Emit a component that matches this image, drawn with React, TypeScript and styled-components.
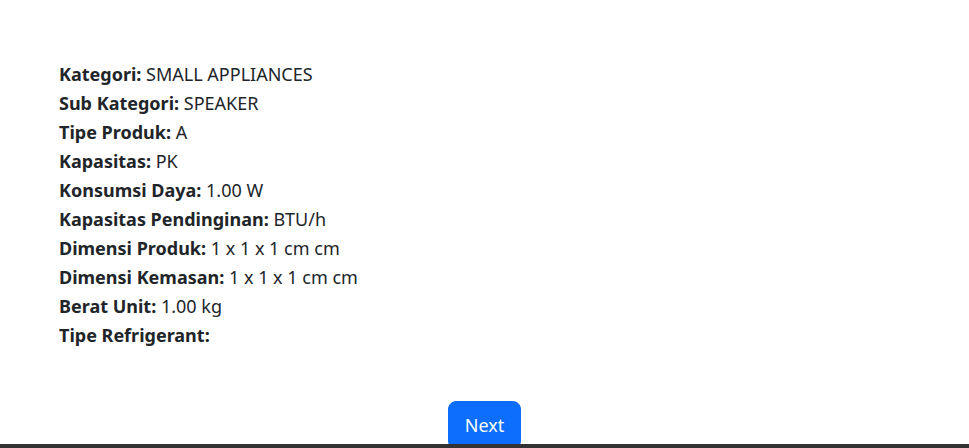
import styled, { createGlobalStyle } from 'styled-components'

interface Spec {
  label: string
  value: string
}

const specs: Spec[] = [
  { label: 'Kategori', value: 'SMALL APPLIANCES' },
  { label: 'Sub Kategori', value: 'SPEAKER' },
  { label: 'Tipe Produk', value: 'A' },
  { label: 'Kapasitas', value: 'PK' },
  { label: 'Konsumsi Daya', value: '1.00 W' },
  { label: 'Kapasitas Pendinginan', value: 'BTU/h' },
  { label: 'Dimensi Produk', value: '1 x 1 x 1 cm cm' },
  { label: 'Dimensi Kemasan', value: '1 x 1 x 1 cm cm' },
  { label: 'Berat Unit', value: '1.00 kg' },
  { label: 'Tipe Refrigerant', value: '' },
]

export default function App() {
  return (
    <>
      <GlobalStyle />
      <Page>
        <SpecList>
          {specs.map((spec) => (
            <SpecRow key={spec.label}>
              <strong>{spec.label}:</strong> {spec.value}
            </SpecRow>
          ))}
        </SpecList>
        <Actions>
          <NextButton type="button">Next</NextButton>
        </Actions>
      </Page>
      <Footer />
    </>
  )
}

const GlobalStyle = createGlobalStyle`
  body {
    margin: 0;
    background: #fff;
    color: #212529;
    font-family: 'Noto Sans', 'Open Sans', sans-serif;
    font-size: 18px;
  }
`

const Page = styled.div`
  padding: 60px 59px 0;
`

const SpecList = styled.div`
  display: flex;
  flex-direction: column;
`

const SpecRow = styled.div`
  line-height: 29px;
  height: 29px;
  white-space: nowrap;

  strong {
    font-weight: 700;
  }
`

const Actions = styled.div`
  display: flex;
  justify-content: center;
  margin-top: 51px;
`

const NextButton = styled.button`
  font-family: inherit;
  font-size: 18px;
  line-height: 30px;
  padding: 8px 16px;
  height: 48px;
  border: 1px solid #0d6efd;
  border-radius: 8px;
  background: #0d6efd;
  color: #fff;
  cursor: pointer;
`

const Footer = styled.div`
  position: fixed;
  left: 0;
  right: 0;
  bottom: 0;
  height: 4px;
  background: #333;
`
